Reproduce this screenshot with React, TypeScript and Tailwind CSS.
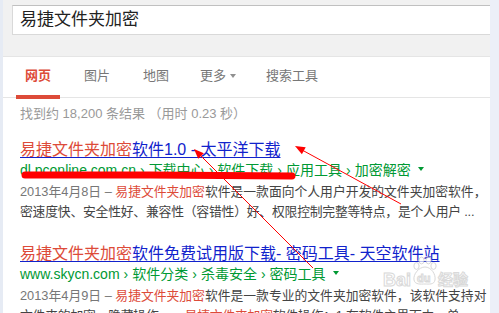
import React from "react";

const Hl = ({ children }: { children: React.ReactNode }) => (
  <span className="text-[#dd4b39]">{children}</span>
);

const Sep = () => <span className="mx-[4px]">›</span>;

const Caret = ({ color }: { color: string }) => (
  <span
    className={`inline-block w-0 h-0 border-x-[3.5px] border-x-transparent border-t-[4px] align-middle ${color}`}
  />
);

type ResultProps = {
  title: React.ReactNode;
  url: React.ReactNode;
  lines: React.ReactNode[];
  className?: string;
};

const Result = ({ title, url, lines, className }: ResultProps) => (
  <div className={`pl-[17px] whitespace-nowrap ${className ?? ""}`}>
    <div className="text-[16px] leading-[20px] text-[#1122cc] underline underline-offset-[2px]">
      {title}
    </div>
    <div className="text-[14px] leading-[16px] text-[#093]">
      {url}
      <span className="ml-[7px] inline-block align-[2px]">
        <Caret color="border-t-[#093]" />
      </span>
    </div>
    <div className="mt-[4px] text-[12.8px] leading-[20px] text-[#444]">
      {lines.map((line, i) => (
        <div key={i} className={i === 1 ? "tracking-[-0.2px]" : ""}>
          {line}
        </div>
      ))}
    </div>
  </div>
);

const Overlay = () => (
  <svg
    className="absolute inset-0 pointer-events-none"
    width="499"
    height="313"
    viewBox="0 0 499 313"
  >
    {/* baidu jingyan watermark */}
    <g opacity="0.7" fill="#fff" stroke="#c9c9c9" strokeWidth="1">
      <text
        x="383"
        y="286"
        fontSize="18"
        fontWeight="bold"
        fontFamily="Liberation Sans, Arial, sans-serif"
      >
        Bai
      </text>
      <ellipse cx="416.5" cy="266" rx="2.6" ry="3.4" />
      <ellipse cx="421.5" cy="260.5" rx="2.6" ry="3.4" />
      <ellipse cx="428.5" cy="260.5" rx="2.6" ry="3.4" />
      <ellipse cx="433.5" cy="266" rx="2.6" ry="3.4" />
      <path d="M425 267 C431 267 436 274 435 280 C434 285 429 284 425 284 C421 284 415 285 414 280 C413 274 419 267 425 267 Z" />
      <text
        x="417"
        y="282"
        fontSize="11"
        fontWeight="bold"
        fontFamily="Liberation Sans, Arial, sans-serif"
      >
        du
      </text>
      <text
        x="438"
        y="285"
        fontSize="15"
        fontWeight="bold"
        fontFamily="Noto Sans CJK SC, sans-serif"
      >
        经验
      </text>
    </g>

    {/* hand-drawn marker under first url */}
    <path
      d="M25 175 L150 175 L292 176"
      stroke="#ff0000"
      strokeWidth="7"
      strokeLinecap="round"
      fill="none"
    />

    {/* arrow A */}
    <line x1="200" y1="155" x2="313" y2="268" stroke="#ff0000" strokeWidth="1" />
    <polygon points="194,149 198.2,158.8 203.8,153.2" fill="#ff0000" />

    {/* arrow B */}
    <line x1="303" y1="150.5" x2="401" y2="204" stroke="#ff0000" strokeWidth="1" />
    <polygon points="295,146 301.9,154.3 305.7,147.3" fill="#ff0000" />
  </svg>
);

export default function App() {
  return (
    <div className="relative w-[499px] h-[313px] overflow-hidden flex bg-white font-['Liberation_Sans',Arial,'Noto_Sans_CJK_SC',sans-serif]">
      <div className="w-[3px] shrink-0 bg-[#e6ebf4]" />

      <div className="flex-1 min-w-0 overflow-hidden">
        {/* search header */}
        <div className="h-[57px] bg-[#f1f1f1] border-b border-[#e5e5e5] pt-[5px] pl-[9px]">
          <div className="h-[30px] -mr-[6px] bg-white border border-[#d9d9d9] border-t-[#c0c0c0] pl-[7px] flex items-center text-[17px] text-[#222]">
            易捷文件夹加密
          </div>
        </div>

        {/* tabs */}
        <div className="h-[41px] border-b border-[#e5e5e5] flex pl-[13px] text-[13px] leading-[16px] text-[#777]">
          <div className="h-[42px] px-[9px] pt-[11px] border-b-[4px] border-[#dd4b39] text-[#dd4b39] font-bold">
            网页
          </div>
          <div className="ml-[15px] px-[9px] pt-[11px]">图片</div>
          <div className="ml-[15px] px-[9px] pt-[11px]">地图</div>
          <div className="ml-[13px] px-[9px] pt-[11px] flex items-start">
            更多
            <span className="ml-[4px] mt-[6px] flex">
              <Caret color="border-t-[#909090]" />
            </span>
          </div>
          <div className="ml-[12px] px-[9px] pt-[11px]">搜索工具</div>
        </div>

        {/* stats */}
        <div className="mt-[8px] pl-[17px] text-[13px] leading-[16px] text-[#999] whitespace-nowrap">
          找到约 18,200 条结果 （用时 0.23 秒）
        </div>

        <Result
          className="mt-[18px]"
          title={
            <>
              <Hl>易捷文件夹加密</Hl>软件1.0 - 太平洋下载
            </>
          }
          url={
            <>
              dl.pconline.com.cn
              <Sep />
              下载中心
              <Sep />
              软件下载
              <Sep />
              应用工具
              <Sep />
              加密解密
            </>
          }
          lines={[
            <>
              <span className="text-[#777]">2013年4月8日 – </span>
              <Hl>易捷文件夹加密</Hl>软件是一款面向个人用户开发的文件夹加密软件，
            </>,
            <>密速度快、安全性好、兼容性（容错性）好、权限控制完整等特点，是个人用户 ...</>,
          ]}
        />

        <Result
          className="mt-[22px]"
          title={
            <>
              <Hl>易捷文件夹加密</Hl>软件免费试用版下载- 密码工具- 天空软件站
            </>
          }
          url={
            <>
              www.skycn.com
              <Sep />
              软件分类
              <Sep />
              杀毒安全
              <Sep />
              密码工具
            </>
          }
          lines={[
            <>
              <span className="text-[#777]">2013年4月9日 – </span>
              <Hl>易捷文件夹加密</Hl>软件是一款专业的文件夹加密软件，该软件支持对
            </>,
            <>
              文件夹的加密、隐藏操作。... <Hl>易捷文件夹加密</Hl>软件操作：1.在软件主界面中，单 ...
            </>,
          ]}
        />
      </div>

      <div className="w-[9px] shrink-0 bg-[#eceff8]" />
      <Overlay />
    </div>
  );
}
